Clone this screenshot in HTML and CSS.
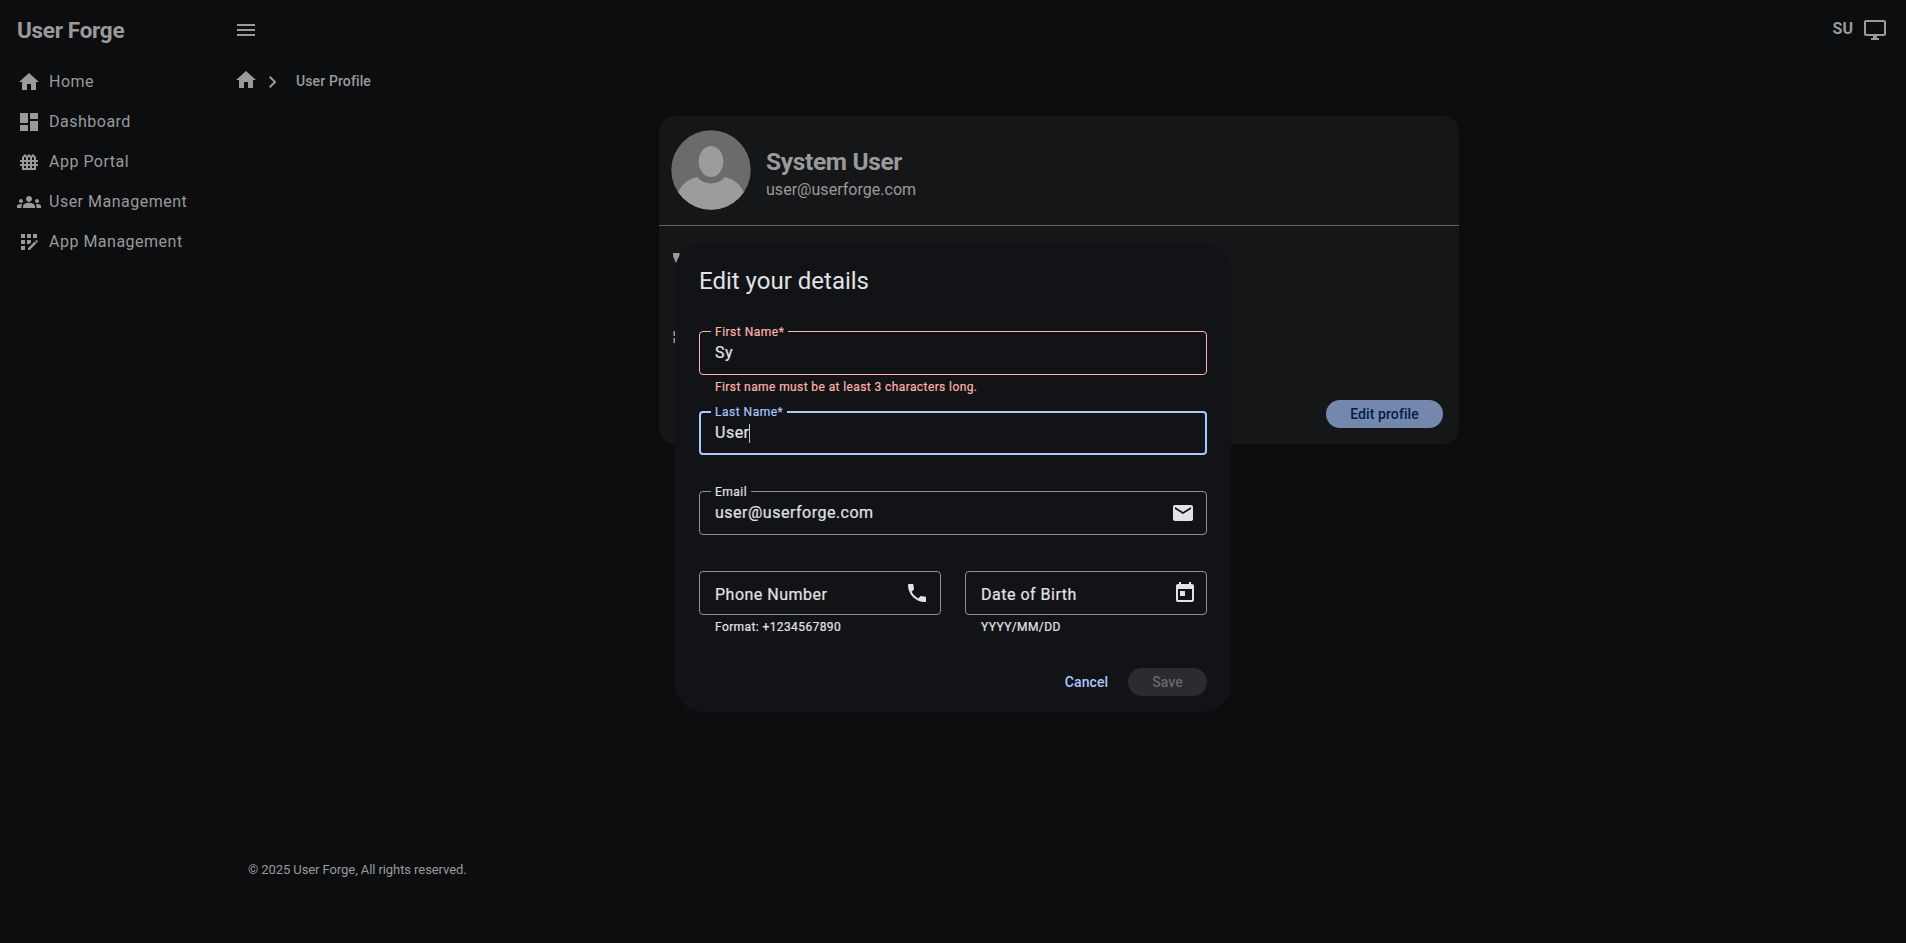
FILE: index.html
```html
<!DOCTYPE html>
<html lang="en">
<head>
<meta charset="utf-8">
<title>User Forge</title>
<link rel="stylesheet" href="styles.css">
</head>
<body>
<div class="app">
  <aside class="sidebar">
    <h1 class="brand">User Forge</h1>
    <nav class="nav">
      <a class="nav-item"><svg viewBox="0 0 24 24"><path d="M10 20v-6h4v6h5v-8h3L12 3 2 12h3v8z"/></svg>Home</a>
      <a class="nav-item"><svg viewBox="0 0 24 24"><path d="M3 13h8V3H3v10zm0 8h8v-6H3v6zm10 0h8V11h-8v10zm0-18v6h8V3h-8z"/></svg>Dashboard</a>
      <a class="nav-item"><svg viewBox="0 0 24 24"><path d="M21 12v-2h-2V7l-3-3-2 2-2-2-2 2-2-2-3 3v3H3v2h2v2H3v2h2v4h14v-4h2v-2h-2v-2h2zm-5-5.170l1 1V10h-2V7.830l1-1zm-4 0l1 1V10h-2V7.830l1-1zM11 14v-2h2v2h-2zm2 2v2h-2v-2h2zM7 7.830l1-1 1 1V10H7V7.830zM7 12h2v2H7v-2zm0 4h2v2H7v-2zm10 2h-2v-2h2v2zm0-4h-2v-2h2v2z"/></svg>App Portal</a>
      <a class="nav-item"><svg viewBox="0 0 24 24"><path d="M4 13c1.100 0 2-.9 2-2s-.9-2-2-2-2 .9-2 2 .9 2 2 2zm1.130 1.100C4.760 14.040 4.390 14 4 14c-.99 0-1.930.21-2.780.58C.48 14.900 0 15.620 0 16.430V18h4.500v-1.610c0-.83.23-1.610.63-2.290zM20 13c1.100 0 2-.9 2-2s-.9-2-2-2-2 .9-2 2 .9 2 2 2zm4 3.430c0-.81-.48-1.530-1.220-1.850C21.930 14.210 20.990 14 20 14c-.39 0-.76.04-1.130.1.400.68.63 1.460.63 2.290V18H24v-1.570zM16.240 13.650C15.070 13.130 13.630 12.750 12 12.750s-3.070.39-4.240.9C6.680 14.130 6 15.210 6 16.390V18h12v-1.610c0-1.180-.68-2.260-1.760-2.740zM9 9c0 1.660 1.340 3 3 3s3-1.340 3-3-1.340-3-3-3-3 1.340-3 3z"/></svg>User Management</a>
      <a class="nav-item"><svg viewBox="0 0 24 24"><path d="M10 4h4v4h-4zM4 16h4v4H4zM4 10h4v4H4zM4 4h4v4H4zM14 12.420V10h-4v4h2.420zM20.880 11.290l-1.170-1.170c-.16-.16-.42-.16-.58 0l-.88.88L20 12.750l.88-.88c.16-.16.16-.42 0-.58zM11 18.250V20h1.750l6.670-6.670-1.750-1.750zM16 4h4v4h-4z"/></svg>App Management</a>
    </nav>
  </aside>
  <div class="content">
    <header class="topbar">
      <svg class="icon" viewBox="0 0 24 24"><path d="M3 18h18v-2H3v2zm0-5h18v-2H3v2zm0-7v2h18V6H3z"/></svg>
      <div class="topbar-end">
        <span class="initials">SU</span>
        <svg class="icon" viewBox="0 0 24 24"><path d="M21 2H3c-1.100 0-2 .9-2 2v12c0 1.100.9 2 2 2h7v2H8v2h8v-2h-2v-2h7c1.100 0 2-.9 2-2V4c0-1.100-.9-2-2-2zm0 14H3V4h18v12z"/></svg>
      </div>
    </header>
    <div class="crumbs">
      <svg class="icon crumb-home" viewBox="0 0 24 24"><path d="M10 20v-6h4v6h5v-8h3L12 3 2 12h3v8z"/></svg>
      <svg class="crumb-sep" viewBox="0 0 8 12"><path d="M1.400 0 0 1.400 4.600 6 0 10.600 1.400 12l6-6z"/></svg>
      <span>User Profile</span>
    </div>
    <main class="card">
      <div class="card-head">
        <svg class="avatar" viewBox="0 0 80 80">
          <defs><clipPath id="disc"><circle cx="40" cy="40" r="39.700"/></clipPath></defs>
          <circle cx="40" cy="40" r="39.700" fill="#6b6b6b"/>
          <g clip-path="url(#disc)" fill="#9c9c9c">
            <ellipse cx="40" cy="31.500" rx="12.300" ry="15.500"/>
            <path d="M0 82 7 63C10 55 17 49 26 47Q32 53.500 40 53.500T54 47C63 49 70 55 73 63L80 82z"/>
          </g>
        </svg>
        <div class="who">
          <h2 class="name">System User</h2>
          <p class="mail">user@userforge.com</p>
        </div>
      </div>
      <div class="card-body">
        <svg class="detail-icon" viewBox="0 0 16 16"><path d="M0 3h6.500v3L4 12.500H2.600L0 6z"/></svg>
        <svg class="detail-icon" viewBox="0 0 16 16"><path d="M.5 2h2v5h-2zM.5 9h2v5h-2z"/></svg>
      </div>
      <div class="card-foot"><button class="btn btn-edit">Edit profile</button></div>
    </main>
    <footer class="footer">© 2025 User Forge, All rights reserved.</footer>
  </div>
</div>

<section class="dialog">
  <h2 class="dialog-title">Edit your details</h2>
  <div class="field error">
    <div class="box"><span class="label">First Name*</span><span class="value">Sy</span></div>
    <p class="hint">First name must be at least 3 characters long.</p>
  </div>
  <div class="field focus">
    <div class="box"><span class="label">Last Name*</span><span class="value">User</span><i class="caret"></i></div>
  </div>
  <div class="field">
    <div class="box"><span class="label">Email</span><span class="value">user@userforge.com</span>
      <svg class="suffix" viewBox="0 0 24 24"><path d="M20 4H4c-1.100 0-1.990.9-1.990 2L2 18c0 1.100.9 2 2 2h16c1.100 0 2-.9 2-2V6c0-1.100-.9-2-2-2zm0 4l-8 5-8-5V6l8 5 8-5v2z"/></svg></div>
  </div>
  <div class="field-row">
    <div class="field">
      <div class="box"><span class="value placeholder">Phone Number</span>
        <svg class="suffix" viewBox="0 0 24 24"><path d="M6.620 10.790c1.440 2.830 3.760 5.140 6.590 6.590l2.200-2.200c.27-.27.67-.36 1.020-.24 1.120.37 2.330.57 3.570.57.55 0 1 .45 1 1V20c0 .55-.45 1-1 1-9.390 0-17-7.610-17-17 0-.55.45-1 1-1h3.500c.55 0 1 .45 1 1 0 1.250.2 2.450.57 3.570.11.35.03.74-.25 1.020l-2.200 2.200z"/></svg></div>
      <p class="hint">Format: +1234567890</p>
    </div>
    <div class="field">
      <div class="box"><span class="value placeholder">Date of Birth</span>
        <svg class="suffix suffix-date" viewBox="0 0 24 24"><path d="M19 3h-1V1h-2v2H8V1H6v2H5c-1.110 0-1.990.9-1.990 2L3 19c0 1.100.89 2 2 2h14c1.100 0 2-.9 2-2V5c0-1.100-.9-2-2-2zm0 16H5V8h14v11zM7 10h5v5H7z"/></svg></div>
      <p class="hint">YYYY/MM/DD</p>
    </div>
  </div>
  <div class="actions">
    <button class="btn btn-cancel">Cancel</button>
    <button class="btn btn-save">Save</button>
  </div>
</section>
</body>
</html>
```

FILE: styles.css
```css
* { box-sizing: border-box; margin: 0; }
body { background: #0c0d0f; color: #9a9a9c; font-family: Roboto, sans-serif; overflow: hidden; }
svg { fill: currentColor; flex: none; }
.app { display: flex; height: 943px; }
.sidebar { width: 216px; padding: 16px; }
.brand { padding-left: 1px; font-size: 22.500px; line-height: 28px; font-weight: 700; letter-spacing: -.3px; }
.nav { display: flex; flex-direction: column; margin-top: 17px; }
.nav-item { display: flex; align-items: center; gap: 8px; height: 40px; font-size: 16px; letter-spacing: .5px; }
.nav-item svg { width: 24px; height: 24px; margin: 1px 0 0 1px; }
.content { flex: 1; display: flex; flex-direction: column; padding: 0 19px 0 16px; }
.icon { width: 24px; height: 24px; margin-left: 2px; }
.topbar { display: flex; justify-content: space-between; align-items: center; height: 60px; }
.topbar-end { display: flex; align-items: center; gap: 8px; }
.initials { margin-top: -3px; font-size: 16px; font-weight: 700; letter-spacing: 0; }
.crumbs { display: flex; align-items: center; height: 42px; font-size: 14px; font-weight: 500; letter-spacing: .12px; }
.crumb-home { margin-top: -3px; }
.crumb-sep { width: 8px; height: 12px; margin: 2px 19px 0 11px; }
.card { display: flex; flex-direction: column; width: 800px; height: 328px; margin: 14px 0 0 427px; background: #151617; border-radius: 16px; }
.card-head { display: flex; align-items: center; gap: 15px; height: 110px; padding: 0 12px; border-bottom: 1px solid #616162; }
.avatar { width: 80px; height: 80px; margin-top: -2px; }
.who { margin-top: 7px; }
.name { font-size: 24.500px; line-height: 32px; font-weight: 700; letter-spacing: -.35px; }
.mail { font-size: 16px; line-height: 24px; letter-spacing: .03px; }
.card-body { display: flex; flex: 1; flex-direction: column; gap: 63px; padding: 24px 14px; }
.detail-icon { width: 16px; height: 16px; }
.card-foot { display: flex; justify-content: flex-end; padding: 0 16px 16px; }
.footer { margin: 416px 0 0 16px; font-size: 13px; line-height: 20px; letter-spacing: -.08px; }
.btn { height: 28px; border: 0; border-radius: 14px; font: 500 14px/20px Roboto, sans-serif; letter-spacing: .1px; }
.btn-edit { width: 117px; background: #7487ad; color: #002045; }

.dialog { position: absolute; left: 675px; top: 243px; width: 556px; height: 469px; padding: 22px 24px 16px; border-radius: 28px; background: #121316; color: #e3e2e6; }
.dialog-title { font-size: 24px; line-height: 32px; font-weight: 400; margin-bottom: 34px; }
.field { height: 80px; flex: 1; -webkit-text-stroke: .2px; }
.box { position: relative; display: flex; align-items: center; height: 44px; padding: 0 11px 0 15px; border: 1px solid #8e9099; border-radius: 4px; }
.label { position: absolute; left: 11px; top: -8px; padding: 0 4px; background: #121316; font-size: 12px; line-height: 16px; letter-spacing: .5px; }
.value { font-size: 16px; line-height: 24px; letter-spacing: .5px; }
.placeholder { margin-top: 3px; }
.suffix { width: 24px; height: 24px; margin-left: auto; color: #e2e2ec; }
.suffix-date { margin-top: -1px; margin-right: -2px; }
.hint { padding: 4px 16px; font-size: 12px; line-height: 16px; letter-spacing: .4px; }
.error .box { border-color: #ffb4ab; }
.error .label, .error .hint { color: #ffb4ab; }
.focus .box { border: 2px solid #abc7ff; padding-left: 14px; }
.focus .label { left: 10px; top: -9px; color: #abc7ff; }
.caret { width: 1px; height: 19px; margin-left: -1px; background: #abc7ff; }
.field-row { display: flex; gap: 24px; }
.actions { display: flex; justify-content: flex-end; gap: 8px; margin-top: 17px; }
.btn-cancel { width: 67px; background: none; color: #abc7ff; }
.btn-save { width: 79px; background: #2b2c2f; color: #68686b; }
```
